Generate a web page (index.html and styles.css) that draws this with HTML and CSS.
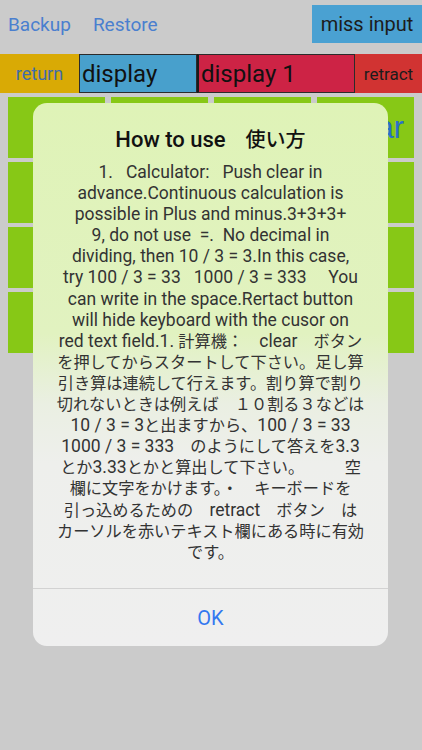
FILE: index.html
```html
<!DOCTYPE html>
<html lang="ja">
<head>
  <meta charset="UTF-8">
  <meta name="viewport" content="width=device-width, initial-scale=1.0">
  <title>Calculator</title>
  <link rel="stylesheet" href="styles.css">
</head>
<body>

<div class="screen">
  <div class="top-bar">
    <a class="link-btn">Backup</a>
    <a class="link-btn">Restore</a>
    <span class="miss-input">miss input</span>
  </div>

  <div class="display-row">
    <span class="cell-return">return</span>
    <span class="cell-display">display</span>
    <span class="cell-display1">display 1</span>
    <span class="cell-retract">retract</span>
  </div>

  <div class="keypad">
    <div class="key"></div>
    <div class="key"></div>
    <div class="key"></div>
    <div class="key key-clear">Clear</div>
    <div class="key"></div>
    <div class="key"></div>
    <div class="key"></div>
    <div class="key"></div>
    <div class="key"></div>
    <div class="key"></div>
    <div class="key"></div>
    <div class="key"></div>
    <div class="key"></div>
    <div class="key"></div>
    <div class="key"></div>
    <div class="key"></div>
  </div>

  <!-- alert -->
  <div class="alert">
    <div class="alert-body">
      <div class="alert-title">How to use<span class="ja">　使い方</span></div>
      <div class="alert-msg">
        <div>1.   Calculator:   Push clear in</div>
        <div>advance.Continuous calculation is</div>
        <div>possible in Plus and minus.3+3+3+</div>
        <div>9, do not use  =.  No decimal in</div>
        <div>dividing, then 10 / 3 = 3.In this case,</div>
        <div>try 100 / 3 = 33   1000 / 3 = 333     You</div>
        <div>can write in the space.Rertact button</div>
        <div>will hide keyboard with the cusor on</div>
        <div>red text field.1. <span class="ja">計算機：　</span>clear<span class="ja">　ボタン</span></div>
        <div class="ja">を押してからスタートして下さい。足し算</div>
        <div class="ja">引き算は連続して行えます。割り算で割り</div>
        <div class="ja">切れないときは例えば　１０割る３などは</div>
        <div>10 / 3 = 3<span class="ja">と出ますから、</span>100 / 3 = 33</div>
        <div>1000 / 3 = 333<span class="ja">　のようにして答えを</span>3.3</div>
        <div><span class="ja">とか</span>3.33<span class="ja">とかと算出して下さい。　　　空</span></div>
        <div class="ja">欄に文字をかけます。・　キーボードを</div>
        <div><span class="ja">引っ込めるための　</span>retract<span class="ja">　ボタン　は</span></div>
        <div class="ja">カーソルを赤いテキスト欄にある時に有効</div>
        <div class="ja">です。</div>
      </div>
    </div>
    <div class="alert-btn">OK</div>
  </div>
</div>

</body>
</html>
```

FILE: styles.css
```css
body {
  margin: 0;
  background: #cbcbcb;
  font-family: Roboto, "Noto Sans CJK JP", sans-serif;
}

.screen {
  position: relative;
  width: 422px;
  height: 750px;
  overflow: hidden;
}

/* top bar */
.top-bar {
  display: flex;
  align-items: center;
  height: 38px;
  padding-top: 5px;
  padding-left: 8px;
  gap: 22px;
}
.link-btn {
  color: #4a7fcf;
  font-size: 19px;
}
.miss-input {
  margin-left: auto;
  width: 110px;
  height: 38px;
  line-height: 38px;
  text-align: center;
  background: #4aa1d2;
  color: #1c1c1c;
  font-size: 20px;
}

/* display row */
.display-row {
  display: flex;
  margin-top: 11px;
  height: 39px;
}
.display-row span {
  display: flex;
  align-items: center;
  box-sizing: border-box;
}
.cell-return {
  width: 79px;
  background: #d9aa05;
  color: #3f6cab;
  font-size: 18px;
  justify-content: center;
}
.cell-display {
  width: 118px;
  background: #48a0cc;
  border: 1px solid #2b2b2b;
  color: #111;
  font-size: 24px;
  padding-left: 2px;
}
.cell-display1 {
  width: 158px;
  background: #cd2345;
  border: 1px solid #2b2b2b;
  border-left: 2px solid #1a1a1a;
  color: #111;
  font-size: 24px;
  padding-left: 2px;
}
.cell-retract {
  flex: 1;
  background: #d13332;
  color: #1c1c1c;
  font-size: 17px;
  justify-content: center;
}

/* keypad */
.keypad {
  display: grid;
  grid-template-columns: repeat(4, 97px);
  grid-auto-rows: 61px;
  gap: 4px 6px;
  padding: 4px 0 0 8px;
}
.key {
  background: #87c816;
}
.key-clear {
  display: flex;
  align-items: center;
  justify-content: flex-end;
  padding-right: 10px;
  color: #2a6fc9;
  font-size: 31px;
  font-family: "Liberation Sans", sans-serif;
}

/* alert */
.alert {
  position: absolute;
  left: 33px;
  top: 103px;
  width: 355px;
  height: 543px;
  border-radius: 14px;
  overflow: hidden;
  display: flex;
  flex-direction: column;
  background: linear-gradient(#dff3b7 0, #e1f2c0 230px, #eaefe2 300px, #eeefec 360px, #efefef 100%);
}
.alert-body {
  flex: 1;
  padding-top: 25px;
  text-align: center;
}
.alert-title {
  font-size: 22px;
  font-weight: 500;
  color: #111;
  line-height: 24px;
  margin-bottom: 10px;
}
.alert-title .ja {
  font-size: 20px;
}
.alert-msg {
  font-size: 17.5px;
  line-height: 21.1px;
  color: #333;
}
.alert-msg div {
  white-space: pre;
}
.alert-msg .ja {
  font-size: 16.2px;
}
.alert-btn {
  height: 57px;
  border-top: 1px solid #d2d2d2;
  display: flex;
  align-items: center;
  justify-content: center;
  color: #3478f0;
  font-size: 20px;
}
```
